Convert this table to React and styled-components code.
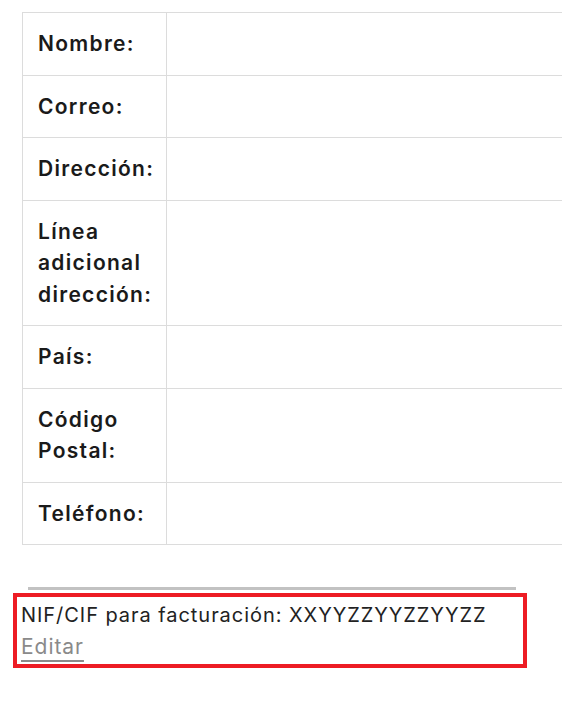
import React from "react";
import styled, { createGlobalStyle } from "styled-components";

const Global = createGlobalStyle`
  html, body { margin: 0; padding: 0; background: #fff; }
  body { font-family: Inter, "Noto Sans", sans-serif; color: #1d1d1d; }
`;

const Page = styled.div`
  padding: 12px 21px 0 22px;
`;

const Table = styled.table`
  width: 540px;
  border-collapse: collapse;
  table-layout: fixed;
`;

const Row = styled.tr`
  border-top: 1px solid #dcdcdc;
  border-bottom: 1px solid #dcdcdc;
`;

const Label = styled.th`
  width: 118px;
  padding: 15px 10px 15px 15px;
  border-left: 1px solid #dcdcdc;
  border-right: 1px solid #dcdcdc;
  text-align: left;
  vertical-align: top;
  font-size: 21px;
  font-weight: 600;
  letter-spacing: 1.3px;
  line-height: 31.5px;
  color: #1a1a1a;
`;

const Value = styled.td`
  padding: 15px 16px;
`;

const Billing = styled.section`
  margin: 42px 0 0 -9px;
  width: 514px;
`;

const Bar = styled.div`
  height: 3px;
  margin: 0 11px 3px 15px;
  background: #c2c2c2;
`;

const Box = styled.div`
  border: 4px solid #ed1c24;
  padding: 2px 4px 1px 4px;
  font-size: 20px;
  letter-spacing: 0.95px;
  line-height: 32px;
  color: #222;
`;

const EditLink = styled.a`
  color: #8a8a8a;
  font-size: 21px;
  text-decoration: underline;
  text-decoration-thickness: 2px;
  text-underline-offset: 6px;
  cursor: pointer;
`;

const rows = [
  "Nombre:",
  "Correo:",
  "Dirección:",
  "Línea adicional dirección:",
  "País:",
  "Código Postal:",
  "Teléfono:",
];

export default function App() {
  return (
    <>
      <Global />
      <Page>
        <Table>
          <tbody>
            {rows.map((r) => (
              <Row key={r}>
                <Label>{r}</Label>
                <Value />
              </Row>
            ))}
          </tbody>
        </Table>
        <Billing>
          <Bar />
          <Box>
            NIF/CIF para facturación: XXYYZZYYZZYYZZ
            <br />
            <EditLink>Editar</EditLink>
          </Box>
        </Billing>
      </Page>
    </>
  );
}
